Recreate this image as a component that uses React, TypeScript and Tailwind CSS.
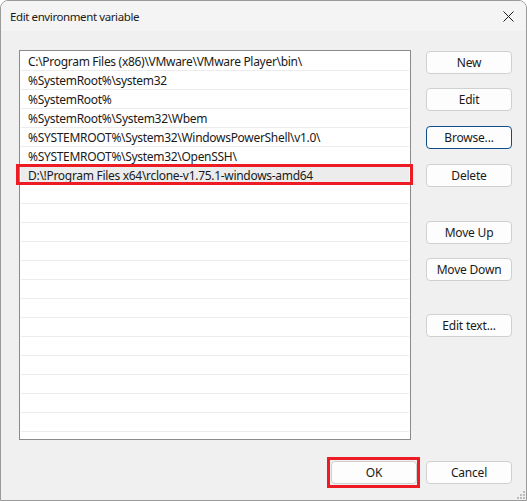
import { FC } from "react";

const paths = [
  "C:\\Program Files (x86)\\VMware\\VMware Player\\bin\\",
  "%SystemRoot%\\system32",
  "%SystemRoot%",
  "%SystemRoot%\\System32\\Wbem",
  "%SYSTEMROOT%\\System32\\WindowsPowerShell\\v1.0\\",
  "%SYSTEMROOT%\\System32\\OpenSSH\\",
  "D:\\!Program Files x64\\rclone-v1.75.1-windows-amd64",
];

const ROWS = 20;
const SELECTED = 6;

const Button: FC<{ label: string; focused?: boolean; className?: string }> = ({ label, focused, className = "" }) => (
  <button
    className={`w-[86px] h-[23px] rounded-[4px] border bg-[#fdfdfd] text-[12px] tracking-[-0.2px] text-[#1a1a1a] leading-none flex items-center justify-center ${
      focused ? "border-[#0f4d8f]" : "border-[#d0d0d0]"
    } ${className}`}
  >
    {label}
  </button>
);

const App: FC = () => {
  const rows = Array.from({ length: ROWS }, (_, i) => paths[i] ?? "");

  return (
    <div
      className="w-[527px] h-[501px] bg-[#f0f0f0] border border-[#9a9a9a] rounded-t-[8px] flex flex-col overflow-hidden relative"
      style={{ fontFamily: '"Segoe UI", "Noto Sans", sans-serif' }}
    >
      {/* title bar */}
      <div className="h-[30px] shrink-0 bg-[#f4f4f4] flex items-center justify-between pl-[9px] pr-[12px]">
        <span className="text-[11.5px] tracking-[-0.4px] text-[#1a1a1a] pt-[1px]">Edit environment variable</span>
        <svg width="11" height="11" viewBox="0 0 11 11" className="text-[#1a1a1a]">
          <path d="M0.5 0.5 L10.5 10.5 M10.5 0.5 L0.5 10.5" stroke="currentColor" strokeWidth="1" />
        </svg>
      </div>

      <div className="flex pl-[18px] pt-[19px]">
        {/* path list */}
        <div className="relative w-[392px] h-[390px] bg-white border border-[#8a8a8a] pt-[1px] px-[1px]">
          {rows.map((text, i) => (
            <div
              key={i}
              className={`relative h-[19px] flex items-center pl-[7px] pt-[2px] border-b text-[12px] tracking-[-0.3px] text-[#1a1a1a] whitespace-nowrap ${
                i === SELECTED ? "bg-[#ececec] border-[#e4e4e4]" : "border-[#ececec]"
              }`}
            >
              {text}
              {i === SELECTED && (
                <span className="absolute -left-[5px] -right-[4px] -top-[2px] -bottom-[1px] border-[3px] border-[#ed1c24]" />
              )}
            </div>
          ))}
        </div>

        {/* side buttons */}
        <div className="flex flex-col ml-[15px] pt-[1px]">
          <Button label="New" />
          <Button label="Edit" className="mt-[14px]" />
          <Button label="Browse..." focused className="mt-[15px]" />
          <Button label="Delete" className="mt-[15px]" />
          <Button label="Move Up" className="mt-[34px]" />
          <Button label="Move Down" className="mt-[14px]" />
          <Button label="Edit text..." className="mt-[33px]" />
        </div>
      </div>

      {/* dialog buttons */}
      <div className="flex justify-end items-start gap-[6px] pr-[14px] mt-[17px]">
        <div className="border-[3px] border-[#ed1c24] pl-[1px] pt-[1px] pb-[1px]">
          <Button label="OK" />
        </div>
        <Button label="Cancel" className="mt-[4px]" />
      </div>

      {/* size grip */}
      <svg width="8" height="8" viewBox="0 0 8 8" className="absolute right-[1px] bottom-[1px]">
        {[
          [6, 0],
          [6, 3],
          [3, 3],
          [6, 6],
          [3, 6],
          [0, 6],
        ].map(([x, y]) => (
          <rect key={`${x}-${y}`} x={x} y={y} width="2" height="2" fill="#bdbdbd" />
        ))}
      </svg>
    </div>
  );
};

export default App;
